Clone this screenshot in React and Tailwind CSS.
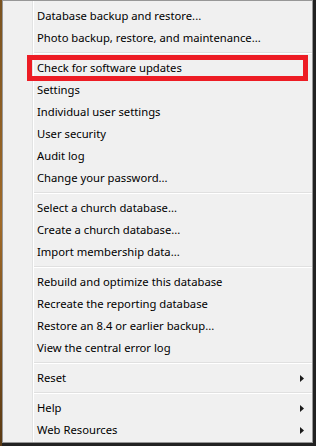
const groups = [
	["Database backup and restore...", "Photo backup, restore, and maintenance..."],
	[
		"Check for software updates",
		"Settings",
		"Individual user settings",
		"User security",
		"Audit log",
		"Change your password...",
	],
	["Select a church database...", "Create a church database...", "Import membership data..."],
	[
		"Rebuild and optimize this database",
		"Recreate the reporting database",
		"Restore an 8.4 or earlier backup...",
		"View the central error log",
	],
	[{ label: "Reset", sub: true }],
	[
		{ label: "Help", sub: true },
		{ label: "Web Resources", sub: true },
	],
];

const Arrow = () => (
	<svg width="4" height="7" viewBox="0 0 4 7" className="block">
		<path d="M0 0 L4 3.5 L0 7 Z" fill="#1a1a1a" />
	</svg>
);

const MenuItem = ({ item }) => {
	const label = typeof item === "string" ? item : item.label;
	const sub = typeof item !== "string" && item.sub;
	return (
		<div className="h-[22px] flex items-center justify-between pl-[3px] pr-[8px] text-black">
			<span>{label}</span>
			{sub && <Arrow />}
		</div>
	);
};

const Separator = () => (
	<div className="h-[8px] flex flex-col justify-center">
		<div className="h-px bg-[#e0e0e0]" />
		<div className="h-px bg-white" />
	</div>
);

export default function App() {
	return (
		<div
			className="w-[316px] h-[446px] flex bg-[#222] text-[11.25px] leading-none"
			style={{ fontFamily: '"Noto Sans", sans-serif' }}
		>
			<div className="w-[2px] h-full bg-gradient-to-b from-[#7a5320] via-[#a06a28] to-[#5a3a14]" />
			<div className="relative w-[311px] h-[443px] border border-[#979797] bg-[#f0f0f0] flex">
				<div className="w-[29px] shrink-0" />
				<div className="w-px bg-[#e2e3e3]" />
				<div className="w-px bg-white" />
				<div className="flex-1 flex flex-col pt-[4px]">
					{groups.map((g, i) => (
						<div key={i}>
							{i > 0 && <Separator />}
							{g.map((item, j) => (
								<MenuItem key={j} item={item} />
							))}
						</div>
					))}
				</div>

				{/* highlight box drawn over the menu */}
				<div className="absolute left-[24px] top-[54px] w-[281px] h-[26px] border-[5px] border-[#ed1c24]" />
			</div>
		</div>
	);
}
